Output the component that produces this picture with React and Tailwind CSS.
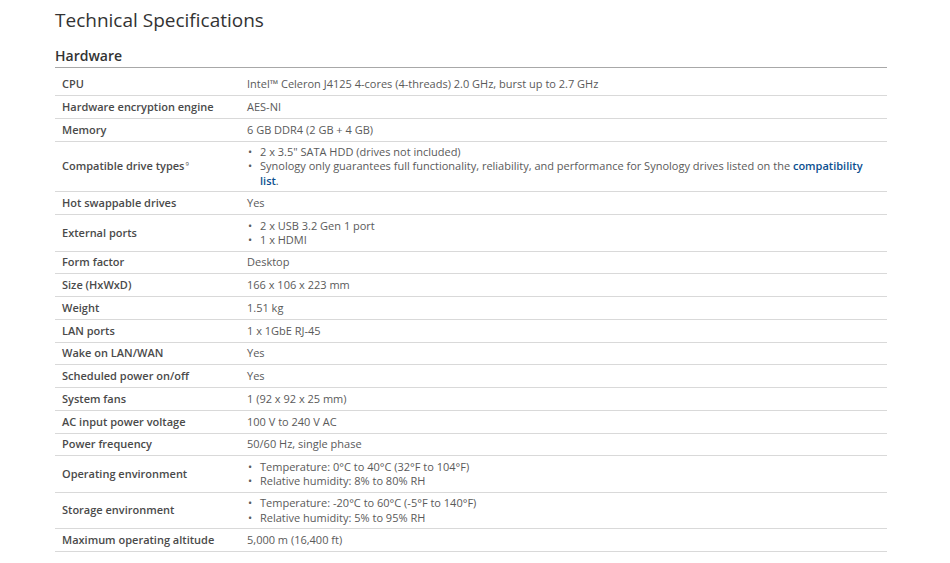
import React from 'react';

const specs = [
  { label: 'CPU', value: 'Intel™ Celeron J4125 4-cores (4-threads) 2.0 GHz, burst up to 2.7 GHz' },
  { label: 'Hardware encryption engine', value: 'AES-NI' },
  { label: 'Memory', value: '6 GB DDR4 (2 GB + 4 GB)' },
  {
    label: 'Compatible drive types',
    sup: '9',
    list: [
      '2 x 3.5" SATA HDD (drives not included)',
      <>
        Synology only guarantees full functionality, reliability, and performance for Synology drives listed on the{' '}
        <a href="#" className="font-semibold text-[#0b4f8f]">compatibility list</a>.
      </>,
    ],
  },
  { label: 'Hot swappable drives', value: 'Yes' },
  { label: 'External ports', list: ['2 x USB 3.2 Gen 1 port', '1 x HDMI'] },
  { label: 'Form factor', value: 'Desktop' },
  { label: 'Size (HxWxD)', value: '166 x 106 x 223 mm' },
  { label: 'Weight', value: '1.51 kg' },
  { label: 'LAN ports', value: '1 x 1GbE RJ-45' },
  { label: 'Wake on LAN/WAN', value: 'Yes' },
  { label: 'Scheduled power on/off', value: 'Yes' },
  { label: 'System fans', value: '1 (92 x 92 x 25 mm)' },
  { label: 'AC input power voltage', value: '100 V to 240 V AC' },
  { label: 'Power frequency', value: '50/60 Hz, single phase' },
  {
    label: 'Operating environment',
    list: ['Temperature: 0°C to 40°C (32°F to 104°F)', 'Relative humidity: 8% to 80% RH'],
  },
  {
    label: 'Storage environment',
    list: ['Temperature: -20°C to 60°C (-5°F to 140°F)', 'Relative humidity: 5% to 95% RH'],
  },
  { label: 'Maximum operating altitude', value: '5,000 m (16,400 ft)' },
];

const SpecRow = ({ spec, first }) => (
  <div
    className={`flex items-center border-b border-[#d9d9d9] text-[11px] leading-[14.25px] ${
      first ? 'min-h-[28px] pt-[9px] pb-[3.5px]' : 'min-h-[22.75px] py-[3.5px]'
    }`}
  >
    <div className="w-[185px] shrink-0 pl-[7px] font-semibold text-[#4a4a4a]">
      {spec.label}
      {spec.sup && (
        <span className="relative -top-[4px] ml-[1px] text-[6px] leading-none font-normal">{spec.sup}</span>
      )}
    </div>
    <div className="flex-1 pl-[7px] pr-[20px] text-[#5a5a5a]">
      {spec.list ? (
        <ul>
          {spec.list.map((item, i) => (
            <li key={i} className="flex">
              <span className="w-[13px] shrink-0 pl-[1px]">•</span>
              <span>{item}</span>
            </li>
          ))}
        </ul>
      ) : (
        spec.value
      )}
    </div>
  </div>
);

export default function App() {
  return (
    <div
      className="min-h-[563px] bg-white px-[55px] pt-[9px]"
      style={{ fontFamily: '"Open Sans", "Noto Sans", sans-serif' }}
    >
      <div className="w-[832px]">
        <h1 className="text-[19px] leading-[23px] font-normal text-[#333]">Technical Specifications</h1>
        <h2 className="mt-[14px] border-b border-[#a8a8a8] pb-[2px] text-[14px] leading-[19px] font-semibold text-[#333]">
          Hardware
        </h2>
        <div>
          {specs.map((spec, i) => (
            <SpecRow key={spec.label} spec={spec} first={i === 0} />
          ))}
        </div>
      </div>
    </div>
  );
}
